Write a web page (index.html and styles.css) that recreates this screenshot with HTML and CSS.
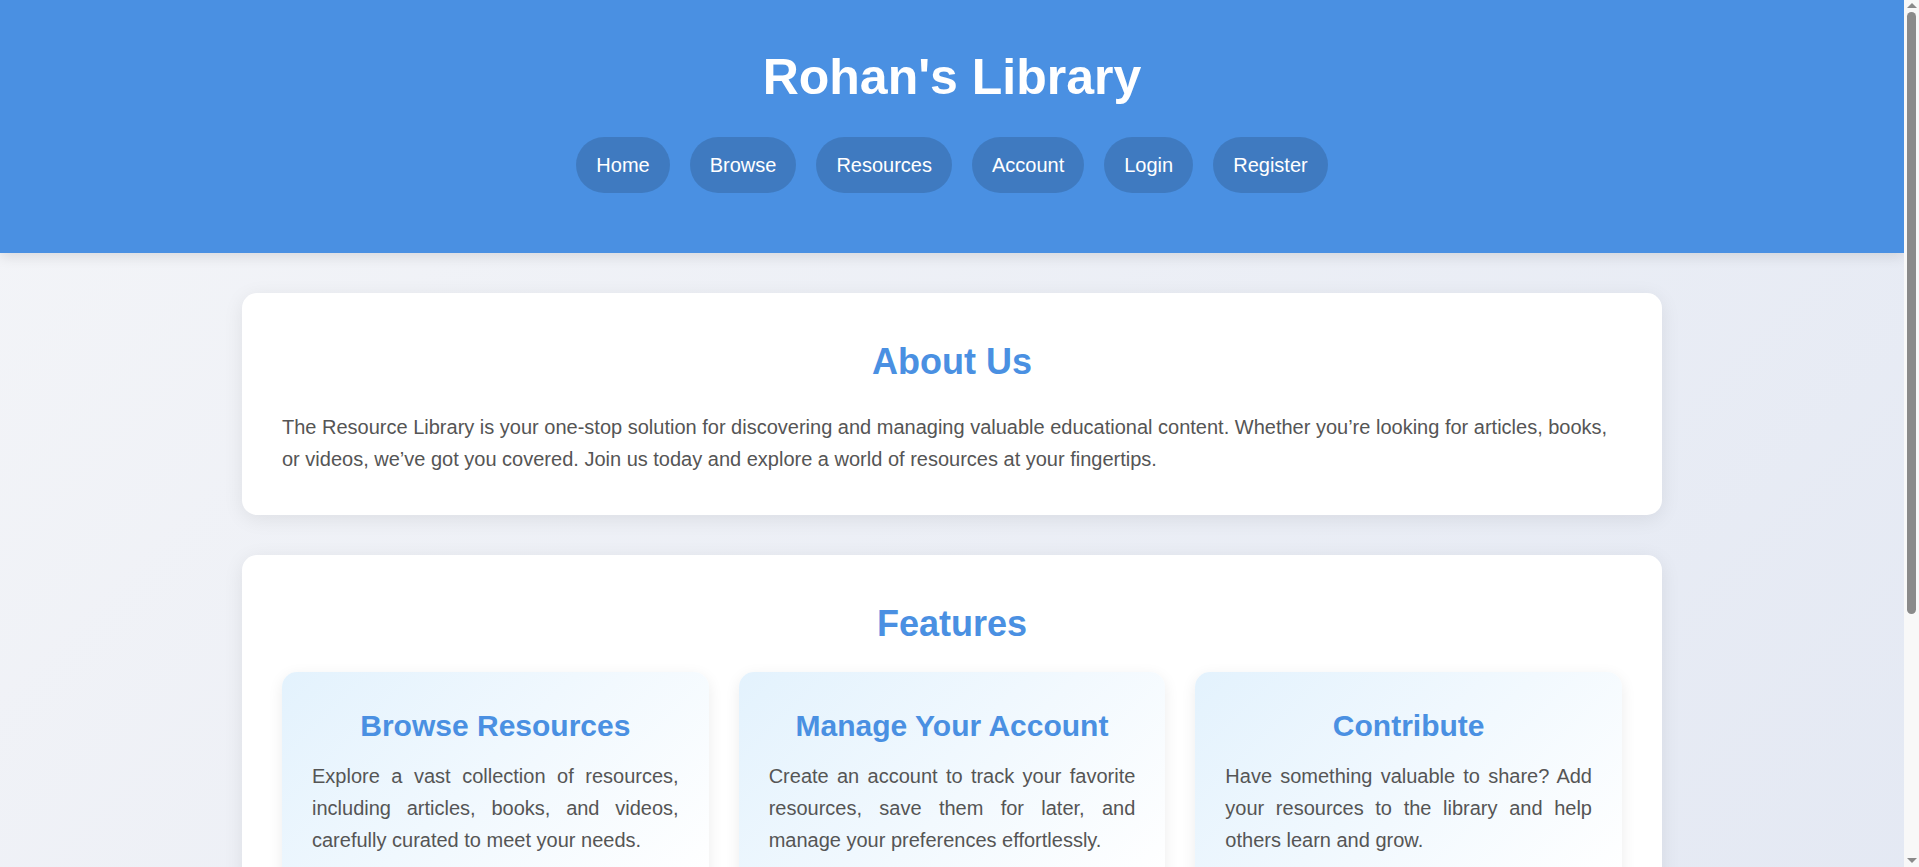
FILE: index.html
```html
<!DOCTYPE html>
<html lang="en">
<head>
<meta charset="UTF-8">
<title>Rohan's Library</title>
<link rel="stylesheet" href="styles.css">
</head>
<body>
<header class="site-header">
  <h1 class="site-title">Rohan's Library</h1>
  <nav class="nav">
    <a class="nav-link" href="#">Home</a>
    <a class="nav-link" href="#">Browse</a>
    <a class="nav-link" href="#">Resources</a>
    <a class="nav-link" href="#">Account</a>
    <a class="nav-link" href="#">Login</a>
    <a class="nav-link" href="#">Register</a>
  </nav>
</header>
<main class="container">
  <section class="card">
    <h2 class="card-title">About Us</h2>
    <p class="card-text">The Resource Library is your one-stop solution for discovering and managing valuable educational content. Whether you’re looking for articles, books, or videos, we’ve got you covered. Join us today and explore a world of resources at your fingertips.</p>
  </section>
  <section class="card">
    <h2 class="card-title">Features</h2>
    <div class="features">
      <div class="feature">
        <h3 class="feature-title">Browse Resources</h3>
        <p class="feature-text">Explore a vast collection of resources, including articles, books, and videos, carefully curated to meet your needs.</p>
      </div>
      <div class="feature">
        <h3 class="feature-title">Manage Your Account</h3>
        <p class="feature-text">Create an account to track your favorite resources, save them for later, and manage your preferences effortlessly.</p>
      </div>
      <div class="feature">
        <h3 class="feature-title">Contribute</h3>
        <p class="feature-text">Have something valuable to share? Add your resources to the library and help others learn and grow.</p>
      </div>
    </div>
  </section>
</main>
<footer class="site-footer">
  <p class="footer-text">&copy; 2024 Rohan's Library. All rights reserved.</p>
</footer>
<div class="scrollbar" aria-hidden="true">
  <span class="scroll-arrow scroll-up"></span>
  <span class="scroll-thumb"></span>
  <span class="scroll-arrow scroll-down"></span>
</div>
</body>
</html>
```

FILE: styles.css
```css
* {
  box-sizing: border-box;
}

html, body {
  margin: 0;
  padding: 0;
}

body {
  font-family: "Liberation Sans", Arial, Helvetica, sans-serif;
  font-size: 18px;
  line-height: 1.6;
  color: #555555;
  background: linear-gradient(135deg, #f4f5f8 0%, #e3e8f3 100%);
  min-height: 100vh;
  margin-right: 15px;
}

.site-header {
  background: #4a90e2;
  color: #ffffff;
  text-align: center;
  padding: 37px 20px 60px;
  box-shadow: 0 4px 12px rgba(0, 0, 0, 0.1);
}

.site-title {
  margin: 0 0 20px;
  font-size: 50px;
  line-height: 1.6;
  font-weight: bold;
}

.nav {
  display: flex;
  justify-content: center;
  gap: 20px;
}

.nav-link {
  display: inline-block;
  color: #ffffff;
  text-decoration: none;
  font-size: 20px;
  line-height: 1.6;
  padding: 12px 20px;
  border-radius: 30px;
  background: rgba(0, 0, 0, 0.15);
}

.container {
  max-width: 1420px;
  margin: 40px auto 0;
  display: flex;
  flex-direction: column;
  gap: 40px;
}

.card {
  background: #ffffff;
  border-radius: 15px;
  padding: 40px;
  box-shadow: 0 4px 20px rgba(0, 0, 0, 0.08);
}

.card-title {
  margin: 0 0 20px;
  font-size: 36px;
  line-height: 1.6;
  color: #4a90e2;
  text-align: center;
}

.card-text {
  margin: 0;
  font-size: 20px;
  line-height: 1.6;
}

.features {
  display: grid;
  grid-template-columns: repeat(3, 1fr);
  gap: 30px;
}

.feature {
  background: linear-gradient(135deg, #e3f2fd 0%, #ffffff 100%);
  border-radius: 15px;
  padding: 30px;
  box-shadow: 0 4px 15px rgba(0, 0, 0, 0.08);
}

.feature-title {
  margin: 0 0 10px;
  font-size: 30px;
  line-height: 1.6;
  color: #4a90e2;
  text-align: center;
}

.feature-text {
  margin: 0;
  font-size: 20px;
  line-height: 1.6;
  text-align: justify;
}

.site-footer {
  margin-top: 40px;
  background: #4a90e2;
  color: #ffffff;
  text-align: center;
  padding: 20px;
}

.footer-text {
  margin: 0;
}

/* drawn browser scrollbar overlay */
.scrollbar {
  position: fixed;
  top: 0;
  right: 0;
  width: 15px;
  height: 100vh;
  background: #f8f8f8;
  display: flex;
  flex-direction: column;
  align-items: center;
}

.scroll-arrow {
  width: 0;
  height: 0;
  border-left: 5px solid transparent;
  border-right: 5px solid transparent;
}

.scroll-up {
  margin-top: 3px;
  border-bottom: 5px solid #8a8a8a;
}

.scroll-down {
  margin-top: auto;
  margin-bottom: 4px;
  border-top: 5px solid #8a8a8a;
}

.scroll-thumb {
  margin-top: 4px;
  width: 9px;
  height: 602px;
  border-radius: 5px;
  background: #8a8a8a;
}
```
